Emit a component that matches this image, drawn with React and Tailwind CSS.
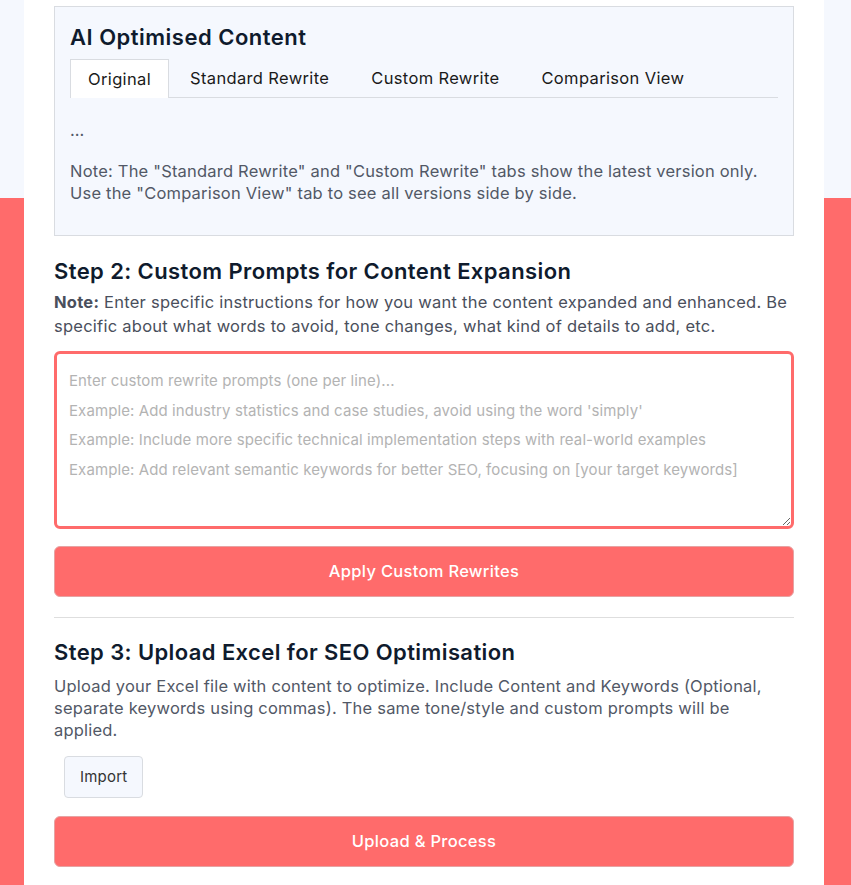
import React from "react";

export default function App() {
  const tabs = ["Original", "Standard Rewrite", "Custom Rewrite", "Comparison View"];
  const placeholder =
    "Enter custom rewrite prompts (one per line)...\nExample: Add industry statistics and case studies, avoid using the word 'simply'\nExample: Include more specific technical implementation steps with real-world examples\nExample: Add relevant semantic keywords for better SEO, focusing on [your target keywords]";
  return (
    <div
      className="min-h-[885px] bg-[linear-gradient(to_bottom,#f5f8fe_198px,#ff6b6b_198px)]"
      style={{ fontFamily: "Inter, 'Noto Sans', sans-serif" }}
    >
      <div className="ml-[24px] w-[800px] bg-white px-[30px] pt-[6px] pb-[20px] min-h-[885px]">
        {/* AI Optimised Content box */}
        <div className="border border-[#d9dce1] bg-[#f5f8fe] px-[15px] pt-[15px] pb-[31px]">
          <h2 className="text-[22px] leading-[30px] tracking-[0.5px] font-semibold text-[#0f1b2d]">AI Optimised Content</h2>
          <div className="mt-[7px] flex border-b border-[#d9dce1]">
            {tabs.map((t, i) => (
              <div
                key={t}
                className={
                  i === 0
                    ? "-mb-px border border-b-0 border-[#d9dce1] bg-white px-[17px] h-[39px] flex items-center text-[16.5px] tracking-[0.35px] text-[#1a1a1a]"
                    : "px-[21px] h-[38px] flex items-center text-[16.5px] tracking-[0.35px] text-[#1a1a1a]"
                }
              >
                {t}
              </div>
            ))}
          </div>
          <div className="mt-[21px] text-[16.5px] leading-[22px] text-[#525866]">...</div>
          <p className="mt-[19px] text-[16.5px] leading-[22px] tracking-[0.2px] text-[#525866]">
            Note: The "Standard Rewrite" and "Custom Rewrite" tabs show the latest version only.
            <br />
            Use the "Comparison View" tab to see all versions side by side.
          </p>
        </div>

        {/* Step 2 */}
        <h2 className="mt-[20px] text-[22px] leading-[30px] tracking-[0.4px] font-semibold text-[#0f1b2d]">
          Step 2: Custom Prompts for Content Expansion
        </h2>
        <p className="mt-[5px] text-[16.5px] leading-[23.5px] tracking-[0.25px] text-[#4a4f5c]">
          <span className="font-bold">Note:</span> Enter specific instructions for how you want the content expanded and enhanced. Be specific about what words to avoid, tone changes, what kind of details to add, etc.
        </p>
        <textarea
          className="mt-[13px] block w-full h-[178px] rounded-[6px] border-[3px] border-[#ff6b6b] bg-white px-[12px] py-[12px] text-[15px] leading-[29.6px] tracking-[0.1px] text-[#333] outline-none placeholder:text-[#b3b3b3]"
          placeholder={placeholder}
        />
        <button className="mt-[17px] w-full h-[51px] rounded-[6px] border border-[#e6a3a3] bg-[#ff6b6b] text-[16.5px] tracking-[0.3px] font-medium text-white">
          Apply Custom Rewrites
        </button>

        <div className="mt-[20px] border-t border-[#dedede]" />

        {/* Step 3 */}
        <h2 className="mt-[19px] text-[22px] leading-[30px] tracking-[0.4px] font-semibold text-[#0f1b2d]">
          Step 3: Upload Excel for SEO Optimisation
        </h2>
        <p className="mt-[8px] text-[16.5px] leading-[22px] tracking-[0.2px] text-[#525866]">
          Upload your Excel file with content to optimize. Include Content and Keywords (Optional, separate keywords using commas). The same tone/style and custom prompts will be applied.
        </p>
        <button className="mt-[15px] ml-[10px] h-[42px] px-[15px] rounded-[4px] border border-[#d9dce1] bg-[#f5f8fe] text-[15px] tracking-[0.2px] text-[#333]">
          Import
        </button>
        <button className="mt-[18px] block w-full h-[51px] rounded-[6px] border border-[#e6a3a3] bg-[#ff6b6b] text-[16.5px] tracking-[0.3px] font-medium text-white">
          Upload &amp; Process
        </button>
      </div>
    </div>
  );
}
